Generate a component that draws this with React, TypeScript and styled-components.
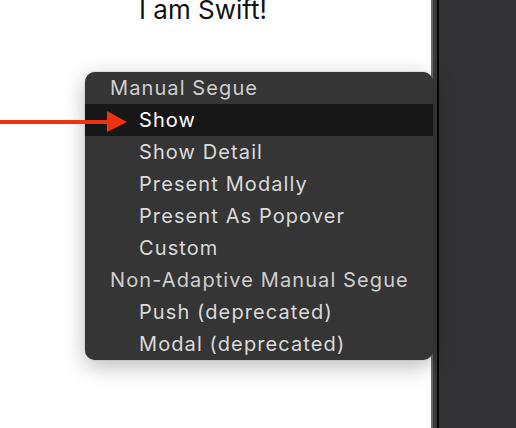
import React from 'react'
import styled, { createGlobalStyle } from 'styled-components'

const GlobalStyle = createGlobalStyle`
  html, body {
    margin: 0;
    padding: 0;
    width: 516px;
    height: 428px;
    overflow: hidden;
    background: #ffffff;
  }
  #root {
    width: 516px;
    height: 428px;
  }
`

const Screen = styled.div`
  position: relative;
  width: 516px;
  height: 428px;
  display: flex;
  flex-direction: row;
  overflow: hidden;
  font-family: Inter, 'Noto Sans', sans-serif;
`

const Canvas = styled.div`
  width: 431px;
  height: 100%;
  background: #ffffff;
  overflow: hidden;
  box-sizing: border-box;
  padding-left: 139px;
`

const Label = styled.div`
  margin-top: -5px;
  font-size: 26px;
  line-height: 30px;
  color: #111111;
  letter-spacing: 0;
`

const Divider = styled.div`
  width: 8px;
  height: 100%;
  box-sizing: border-box;
  border-left: 2px solid #6a6a6a;
  border-right: 2px solid #050505;
  background: #3a3a3a;
`

const Panel = styled.div`
  flex: 1;
  height: 100%;
  background: #333335;
`

const Menu = styled.ul`
  position: absolute;
  left: 85px;
  top: 72px;
  width: 348px;
  margin: 0;
  padding: 0;
  list-style: none;
  background: #353535;
  border-radius: 10px;
  overflow: hidden;
  box-shadow: 0 6px 22px rgba(0, 0, 0, 0.28), 0 0 1px rgba(0, 0, 0, 0.5);
`

const Row = styled.li<{ $indent?: boolean; $selected?: boolean; $header?: boolean }>`
  height: 32px;
  display: flex;
  align-items: center;
  padding-left: ${({ $indent }) => ($indent ? '54px' : '25px')};
  font-size: 20px;
  letter-spacing: 1.1px;
  color: ${({ $selected, $header }) =>
    $selected ? '#ffffff' : $header ? '#cfcfcf' : '#dadada'};
  background: ${({ $selected }) => ($selected ? '#171717' : 'transparent')};
  white-space: nowrap;
`

const Arrow = styled.svg`
  position: absolute;
  left: 0;
  top: 110px;
`

const items = [
  { text: 'Manual Segue', header: true },
  { text: 'Show', selected: true },
  { text: 'Show Detail' },
  { text: 'Present Modally' },
  { text: 'Present As Popover' },
  { text: 'Custom' },
  { text: 'Non-Adaptive Manual Segue', header: true },
  { text: 'Push (deprecated)' },
  { text: 'Modal (deprecated)' },
]

const App = () => {
  return (
    <Screen>
      <GlobalStyle />
      <Canvas>
        <Label>I am Swift!</Label>
      </Canvas>
      <Divider />
      <Panel />
      <Menu>
        {items.map((item) => (
          <Row
            key={item.text}
            $header={item.header}
            $indent={!item.header}
            $selected={item.selected}
          >
            {item.text}
          </Row>
        ))}
      </Menu>
      <Arrow width="130" height="24" viewBox="0 0 130 24">
        <rect x="0" y="10" width="110" height="4" fill="#f0300f" />
        <polygon points="107,1 127,12 107,22" fill="#f0300f" />
      </Arrow>
    </Screen>
  )
}

export default App
